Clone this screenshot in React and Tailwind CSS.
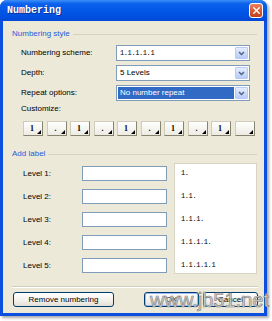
import { X } from 'lucide-react';

const sans = "font-['Liberation_Sans',Arial,sans-serif]";
const mono = "font-['Liberation_Mono','Courier_New',monospace]";

function Chevron() {
  return (
    <svg width="7" height="5" viewBox="0 0 7 5">
      <path d="M1 1l2.5 2.5L6 1" fill="none" stroke="#4D6185" strokeWidth="1.4" />
    </svg>
  );
}

function Select({ value, active, monoText }) {
  return (
    <div className="flex h-4 w-[134px] items-stretch border border-[#7F9DB9] bg-white p-px">
      <div
        className={`flex flex-1 items-center pl-[2px] ${active ? 'bg-[#316AC5] text-white' : 'text-black'} ${
          monoText ? `${mono} text-[7px] tracking-[-0.4px]` : ''
        }`}
      >
        {value}
      </div>
      <div className="ml-px flex w-[13px] items-center justify-center rounded-[1px] border border-[#B9CBF5] bg-gradient-to-b from-[#E6EEFE] to-[#B7CBF8]">
        <Chevron />
      </div>
    </div>
  );
}

function CustomButton({ label }) {
  return (
    <div className="relative flex h-[15px] w-5 items-center justify-center border border-[#CFCBBD] border-b-[#86836F] border-r-[#86836F] bg-gradient-to-b from-white to-[#EDEBE3]">
      <span className="-ml-[2px] font-['Liberation_Serif',serif] text-[8px] font-bold leading-none">{label}</span>
      {/* dropdown corner mark */}
      <svg className="absolute bottom-[1px] right-[1px]" width="4" height="4" viewBox="0 0 4 4">
        <polygon points="4,0 4,4 0,4" fill="#000" />
      </svg>
    </div>
  );
}

function XpButton({ children, width, isDefault }) {
  return (
    <button
      className={`${width} h-[15px] rounded-[3px] border border-[#003C74] bg-gradient-to-b from-white via-[#F4F3EE] to-[#E2DFD4] text-[8px] leading-none text-black ${
        isDefault ? 'shadow-[inset_0_0_0_1px_#9DBCF4]' : ''
      }`}
    >
      {children}
    </button>
  );
}

function GroupHeader({ title }) {
  return (
    <div className="flex h-[10px] items-center">
      <span className="text-[8px] leading-[10px] text-[#1F5BD8]">{title}</span>
      <div className="ml-[3px] mr-[2px] h-px flex-1 bg-[#D6D2C0]" />
    </div>
  );
}

export default function App() {
  const custom = ['1', '.', '1', '.', '1', '.', '1', '.', '1', ''];
  const previews = ['1.', '1.1.', '1.1.1.', '1.1.1.1.', '1.1.1.1.1'];

  return (
    <div className={`relative h-[321px] w-[272px] overflow-hidden bg-white ${sans}`}>
      <div className="flex h-[316px] w-[267px] flex-col rounded-t-[7px] bg-[#0A4FE0] shadow-[2px_2px_3px_rgba(0,0,0,0.35)]">
        {/* Title bar */}
        <div className="flex h-[21px] items-center justify-between rounded-t-[7px] bg-[linear-gradient(180deg,#3D8FF7_0%,#0B60EC_18%,#0055E5_60%,#0349D8_100%)] pl-[7px] pr-[4px]">
          <span className={`${mono} text-[10px] font-bold text-white [text-shadow:1px_1px_0_#0A2E9A]`}>Numbering</span>
          <div className="flex h-[15px] w-[14px] items-center justify-center rounded-[3px] border border-white bg-gradient-to-b from-[#E8835F] via-[#D85A35] to-[#C2401C]">
            <X size={11} color="#fff" strokeWidth={3} />
          </div>
        </div>

        {/* Body */}
        <div className="flex flex-1 flex-col border-x-[3px] border-b-[3px] border-[#0A4FE0] bg-[#ECE9D8] pl-[9px] pr-[5px] pt-[8px] text-[8px] text-black">
          <GroupHeader title="Numbering style" />

          <div className="mt-[6px] flex flex-col gap-[4px]">
            <div className="flex h-4 items-center">
              <span className="w-[104px] pl-[9px] leading-[10px]">Numbering scheme:</span>
              <Select value="1.1.1.1.1" monoText />
            </div>
            <div className="flex h-4 items-center">
              <span className="w-[104px] pl-[9px] leading-[10px]">Depth:</span>
              <Select value="5 Levels" />
            </div>
            <div className="flex h-4 items-center">
              <span className="w-[104px] pl-[9px] leading-[10px]">Repeat options:</span>
              <Select value="No number repeat" active />
            </div>
          </div>

          <div className="mt-[3px] pl-[9px] leading-[10px]">Customize:</div>
          <div className="mt-[7px] flex gap-[3.5px] pl-[11px]">
            {custom.map((c, i) => (
              <CustomButton key={i} label={c} />
            ))}
          </div>

          <div className="mt-[13px]">
            <GroupHeader title="Add label" />
          </div>

          <div className="mt-[4px] flex">
            <div className="flex flex-col gap-[8px] pl-[11px] pt-[3px]">
              {previews.map((_, i) => (
                <div key={i} className="flex h-[15px] items-center">
                  <span className="w-[59px] leading-[10px]">Level {i + 1}:</span>
                  <div className="h-[15px] w-[85px] border border-[#7F9DB9] bg-white" />
                </div>
              ))}
            </div>
            <div className="ml-[7px] flex h-[111px] w-[83px] flex-col gap-[8.25px] border border-[#D8D4C4] bg-white pl-[6px] pt-[1.5px]">
              {previews.map((p) => (
                <div key={p} className={`flex h-[15px] items-center ${mono} text-[7px] tracking-[-0.4px]`}>
                  {p}
                </div>
              ))}
            </div>
          </div>

          <div className="mr-[1px] mt-[12px] h-px bg-[#D2CEBC] shadow-[0_1px_0_#fff]" />

          <div className="mt-[5px] flex items-center pl-px">
            <XpButton width="w-[101px]">Remove numbering</XpButton>
            <div className="flex-1" />
            <div className="mr-[1px] flex gap-[4px]">
              <XpButton width="w-[55px]" isDefault>
                OK
              </XpButton>
              <XpButton width="w-[55px]">Cancel</XpButton>
            </div>
          </div>
        </div>
      </div>

      {/* watermark lying over the dialog */}
      <div className="pointer-events-none absolute left-[150px] top-[290px] text-[20px] leading-none text-[#d4d4d4] [-webkit-text-stroke:0.6px_#7c7c7c]">
        www.jb51.net
      </div>
    </div>
  );
}
